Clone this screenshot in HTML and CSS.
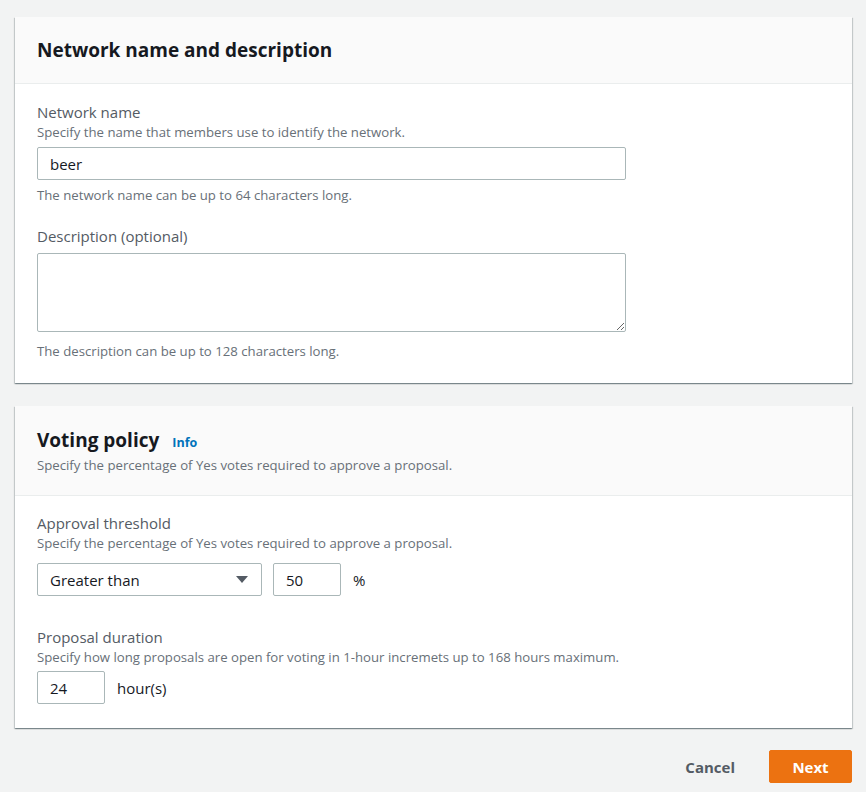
FILE: index.html
```html
<!DOCTYPE html>
<html>
<head>
<meta charset="utf-8">
<link rel="stylesheet" href="styles.css">
</head>
<body>
<div class="page">
  <section class="card">
    <header class="card-head card-head-single">
      <h2 class="card-title">Network name and description</h2>
    </header>
    <div class="card-body body-1">
      <div class="field">
        <div class="label">Network name</div>
        <div class="desc">Specify the name that members use to identify the network.</div>
        <input class="text-input wide mt-name" type="text" value="beer">
        <div class="hint hint-name">The network name can be up to 64 characters long.</div>
      </div>
      <div class="field field-desc">
        <div class="label">Description (optional)</div>
        <textarea class="textarea wide"></textarea>
        <div class="hint hint-desc">The description can be up to 128 characters long.</div>
      </div>
    </div>
  </section>

  <section class="card card-2">
    <header class="card-head card-head-double">
      <div class="title-row">
        <h2 class="card-title">Voting policy</h2>
        <a class="info">Info</a>
      </div>
      <div class="desc head-desc">Specify the percentage of Yes votes required to approve a proposal.</div>
    </header>
    <div class="card-body body-2">
      <div class="field">
        <div class="label">Approval threshold</div>
        <div class="desc">Specify the percentage of Yes votes required to approve a proposal.</div>
        <div class="row mt-select">
          <div class="select">
            <span>Greater than</span>
            <svg class="caret" width="12" height="8" viewBox="0 0 12 8"><path d="M0 0 H12 L6 7 Z" fill="#545b64"/></svg>
          </div>
          <input class="text-input pct" type="text" value="50">
          <span class="unit unit-pct">%</span>
        </div>
      </div>
      <div class="field field-dur">
        <div class="label">Proposal duration</div>
        <div class="desc">Specify how long proposals are open for voting in 1-hour incremets up to 168 hours maximum.</div>
        <div class="row mt-dur">
          <input class="text-input hours" type="text" value="24">
          <span class="unit">hour(s)</span>
        </div>
      </div>
    </div>
  </section>

  <div class="actions">
    <button class="btn-link">Cancel</button>
    <button class="btn-primary">Next</button>
  </div>
</div>
</body>
</html>
```

FILE: styles.css
```css
* { box-sizing: border-box; }
html, body { margin: 0; padding: 0; }
body {
  background: #f2f3f3;
  font-family: "Open Sans", "Noto Sans", sans-serif;
  color: #16191f;
  width: 866px;
  height: 792px;
  overflow: hidden;
}
.page {
  padding: 17px 14px 0 15px;
}
.card {
  background: #fff;
  width: 837px;
  box-shadow: 0 1px 1px 0 rgba(0,28,36,.3), 1px 1px 1px 0 rgba(0,28,36,.15), -1px 1px 1px 0 rgba(0,28,36,.15);
}
.card-2 { margin-top: 23px; }
.card-head {
  background: #fafafa;
  border-bottom: 1px solid #eaeded;
  padding: 0 22px;
}
.card-head-single {
  height: 67px;
  display: flex;
  align-items: center;
}
.card-head-double {
  height: 90px;
  padding-top: 21px;
}
.card-title {
  margin: 0;
  font-size: 19px;
  line-height: 26px;
  font-weight: 700;
  color: #16191f;
}
.title-row {
  display: flex;
  align-items: baseline;
  gap: 13px;
}
.info {
  font-size: 12.5px;
  font-weight: 700;
  color: #0073bb;
}
.head-desc { margin-top: 3px; }
.card-body { padding: 0 22px; }
.body-1 { padding-top: 17px; padding-bottom: 23px; }
.body-2 { padding-top: 16px; padding-bottom: 24px; }
.label {
  font-size: 15px;
  line-height: 22px;
  color: #545b64;
}
.desc {
  font-size: 13.2px;
  line-height: 18px;
  color: #687078;
}
.hint {
  font-size: 13.2px;
  line-height: 18px;
  color: #687078;
}
.text-input, .textarea {
  display: block;
  border: 1px solid #aab7b8;
  border-radius: 2px;
  background: #fff;
  font-family: inherit;
  font-size: 15px;
  color: #16191f;
  padding: 0 12px;
  outline: none;
  margin: 0;
}
.text-input { height: 33px; }
.wide { width: 589px; }
.mt-name { margin-top: 6px; }
.hint-name { margin-top: 6px; }
.field-desc { margin-top: 21px; }
.textarea {
  height: 79px;
  margin-top: 6px;
  resize: vertical;
}
.hint-desc { margin-top: 10px; }
.row {
  display: flex;
  align-items: center;
}
.mt-select { margin-top: 11px; }
.select {
  width: 225px;
  height: 33px;
  border: 1px solid #aab7b8;
  border-radius: 2px;
  display: flex;
  align-items: center;
  justify-content: space-between;
  padding: 0 13px 0 12px;
  font-size: 15px;
  color: #16191f;
}
.caret { display: block; margin-top: 1px; }
.pct {
  width: 68px;
  margin-left: 11px;
}
.unit {
  font-size: 15px;
  color: #16191f;
  margin-left: 12px;
}
.unit-pct { margin-left: 12px; }
.field-dur { margin-top: 30px; }
.mt-dur { margin-top: 5px; }
.hours { width: 68px; height: 33px; }
.actions {
  display: flex;
  justify-content: flex-end;
  align-items: center;
  margin-top: 22px;
  width: 837px;
  gap: 26px;
}
.btn-link {
  background: none;
  border: none;
  font-family: inherit;
  font-weight: 700;
  font-size: 15px;
  color: #545b64;
  padding: 0 8px;
}
.btn-primary {
  background: #ec7211;
  border: 1px solid #ec7211;
  border-radius: 2px;
  color: #fff;
  font-family: inherit;
  font-weight: 700;
  font-size: 15px;
  width: 83px;
  height: 33px;
  padding: 0;
}
```
